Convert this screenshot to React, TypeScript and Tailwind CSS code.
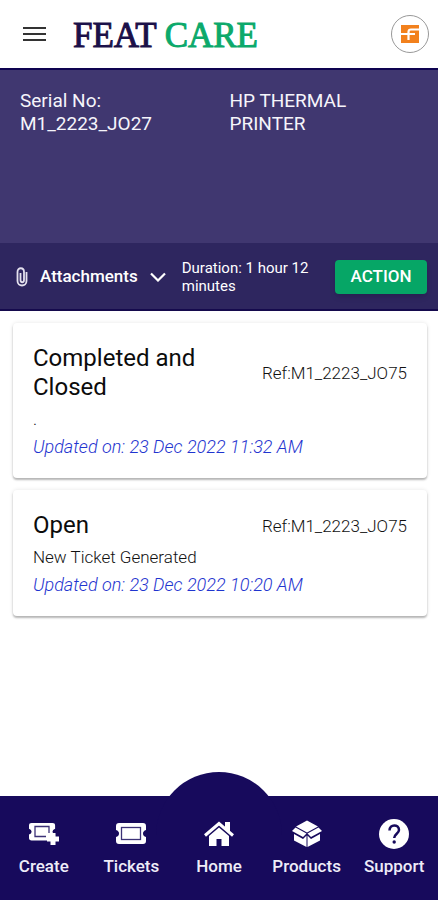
import React from "react";

const cards = [
  {
    title: "Completed and Closed",
    note: ".",
    updated: "23 Dec 2022 11:32 AM",
    reference: "M1_2223_JO75",
  },
  {
    title: "Open",
    note: "New Ticket Generated",
    updated: "23 Dec 2022 10:20 AM",
    reference: "M1_2223_JO75",
  },
];

const ticketPath =
  "M3 0H27Q30 0 30 3V7Q27 8 27 10.500Q27 13 30 14V18Q30 21 27 21H3Q0 21 0 18V14Q3 13 3 10.500Q3 8 0 7V3Q0 0 3 0Z";

function CreateIcon() {
  return (
    <svg width="32" height="30" viewBox="0 0 32 30" aria-hidden="true">
      <path
        transform="translate(1 4) scale(.87 .83)"
        d={ticketPath}
        fill="#fff"
      />
      <path d="M21 14V7.500H7V17.500H18" fill="none" stroke="#3c3277" strokeWidth="1.300" />
      <path d="M25 14v12M19 20h12" stroke="#fff" strokeWidth="5" />
    </svg>
  );
}

function TicketIcon() {
  return (
    <svg width="32" height="30" viewBox="0 0 32 30" aria-hidden="true">
      <path transform="translate(1 4)" d={ticketPath} fill="#fff" />
      <rect x="6.500" y="8.500" width="19" height="12" fill="#fff" stroke="#3c3277" strokeWidth="1.300" />
    </svg>
  );
}

function HomeIcon() {
  return (
    <svg width="32" height="30" viewBox="0 0 32 30" aria-hidden="true">
      <path d="M2 16.500L16 4.500L30 16.500" fill="none" stroke="#fff" strokeWidth="3" />
      <path d="M22 3h5v10l-5-4Z" fill="#fff" />
      <path d="M6 17L16 8.500L26 17V27H18.500V20H13.500V27H6Z" fill="#fff" />
    </svg>
  );
}

function BoxIcon() {
  return (
    <svg width="32" height="30" viewBox="0 0 32 30" aria-hidden="true">
      <g fill="#fff">
        <path d="M16 1.500L27 7.500L16 13.500L5 7.500Z" />
        <path d="M4.500 8.500L15.500 14.500L12 18L1 12Z" />
        <path d="M27.500 8.500L16.500 14.500L20 18L31 12Z" />
        <path d="M3 15L12 20L15.500 16.500V28L3 21.500Z" />
        <path d="M29 15L20 20L16.500 16.500V28L29 21.500Z" />
      </g>
    </svg>
  );
}

function HelpIcon() {
  return (
    <svg width="32" height="30" viewBox="0 0 32 30" aria-hidden="true">
      <circle cx="16" cy="15" r="15" fill="#fff" />
      <path
        d="M11.500 11.500C11.500 4.500 21 5 21 11C21 14.500 16.200 15 16.200 19"
        fill="none"
        stroke="#170a5c"
        strokeWidth="2.500"
      />
      <circle cx="16.200" cy="23" r="1.700" fill="#170a5c" />
    </svg>
  );
}

const tabs = [
  { label: "Create", Icon: CreateIcon },
  { label: "Tickets", Icon: TicketIcon },
  { label: "Home", Icon: HomeIcon },
  { label: "Products", Icon: BoxIcon },
  { label: "Support", Icon: HelpIcon },
];

export default function App() {
  return (
    <div className="flex min-h-screen flex-col bg-white font-['Roboto',sans-serif]">
      <header className="flex h-[70px] items-center border-b-2 border-[#0e0350] pl-[23px] pr-[9px]">
        <button type="button" aria-label="Open menu">
          <svg width="23" height="18" viewBox="0 0 23 18" aria-hidden="true">
            <path d="M0 3h23M0 9h23M0 15h23" stroke="#333" strokeWidth="2" />
          </svg>
        </button>
        <div className="ml-[27px] flex gap-2 pt-1 whitespace-nowrap font-['Liberation_Serif',serif] text-[35px] leading-10 [-webkit-text-stroke-width:1px]">
          <span className="text-[#1b1049]">FEAT</span>
          <span className="text-[#0ca96b]">CARE</span>
        </div>
        <button
          type="button"
          aria-label="Account"
          className="ml-auto flex size-[38px] items-center justify-center rounded-full border border-[#999]"
        >
          <svg width="18" height="18" viewBox="0 0 18 18" aria-hidden="true">
            <rect width="18" height="18" fill="#f2811d" />
            <path d="M0 9H14M7.500 15V7Q7.500 4.500 10 4.500H18" fill="none" stroke="#fff" strokeWidth="2.200" />
          </svg>
        </button>
      </header>

      <main className="flex flex-col">
        <section className="grid h-[173px] grid-cols-2 gap-x-[21px] bg-[#403770] px-5 pt-[19px] text-[19px] leading-[23px] text-[#f6f5fb]">
          <p>
            Serial No:
            <br />
            M1_2223_JO27
          </p>
          <p>
            HP THERMAL
            <br />
            PRINTER
          </p>
        </section>

        <section className="flex h-[68px] items-center bg-[#2e265f] pl-4 pr-[11px] text-white shadow-[inset_0_-2px_0_#150a4d]">
          <button type="button" className="flex items-center text-[17px] font-medium">
            <svg width="12" height="20" viewBox="0 0 12 20" className="mr-3" aria-hidden="true">
              <path
                d="M10.500 5V14C10.500 20 1.500 20 1.500 14V5C1.500 0 8 0 8 5V13C8 16 4.500 16 4.500 13V6"
                fill="none"
                stroke="#e4e1ee"
                strokeWidth="1.800"
              />
            </svg>
            Attachments
            <svg width="16" height="10" viewBox="0 0 16 10" className="ml-3" aria-hidden="true">
              <path d="M1 1.500L8 8.500L15 1.500" fill="none" stroke="#fff" strokeWidth="2.200" />
            </svg>
          </button>
          <p className="ml-4 w-[136px] text-[15px] leading-[18px]">Duration: 1 hour 12 minutes</p>
          <button
            type="button"
            className="ml-auto h-[34px] w-[92px] rounded bg-[#06a666] text-[17px] font-medium shadow-md"
          >
            ACTION
          </button>
        </section>

        <section className="flex flex-col gap-3 pt-3 pr-[11px] pb-6 pl-[13px]">
          {cards.map((card) => (
            <article
              key={card.title}
              className="rounded bg-white px-5 pt-[21px] pb-[17px] shadow-[0_2px_2px_rgba(0,0,0,0.26),0_0_4px_rgba(0,0,0,0.1)]"
            >
              <div className="flex items-center justify-between">
                <h2 className="w-[190px] text-[24px] leading-[29px] text-[#0c0c0c]">{card.title}</h2>
                <p className="text-[17px] leading-6 font-light text-[#111]">Ref:{card.reference}</p>
              </div>
              <p className="mt-[3px] text-[17px] leading-7 font-light text-[#111]">{card.note}</p>
              <p className="text-[18px] leading-7 font-light text-[#1f35cf] italic">
                Updated on: {card.updated}
              </p>
            </article>
          ))}
        </section>
      </main>

      <nav className="relative mt-auto h-[104px] bg-[#170a5c]">
        <div className="absolute -top-6 left-1/2 size-[126px] -translate-x-1/2 rounded-full bg-[#170a5c] [clip-path:inset(0_0_50%_0)]" />
        <div className="relative grid h-full grid-cols-5 pt-[23px]">
          {tabs.map(({ label, Icon }) => (
            <a
              key={label}
              href={`#${label.toLowerCase()}`}
              className="flex flex-col items-center gap-[5px] text-[17px] leading-6 font-medium text-[#eeecf8]"
            >
              <Icon />
              {label}
            </a>
          ))}
        </div>
      </nav>
    </div>
  );
}
